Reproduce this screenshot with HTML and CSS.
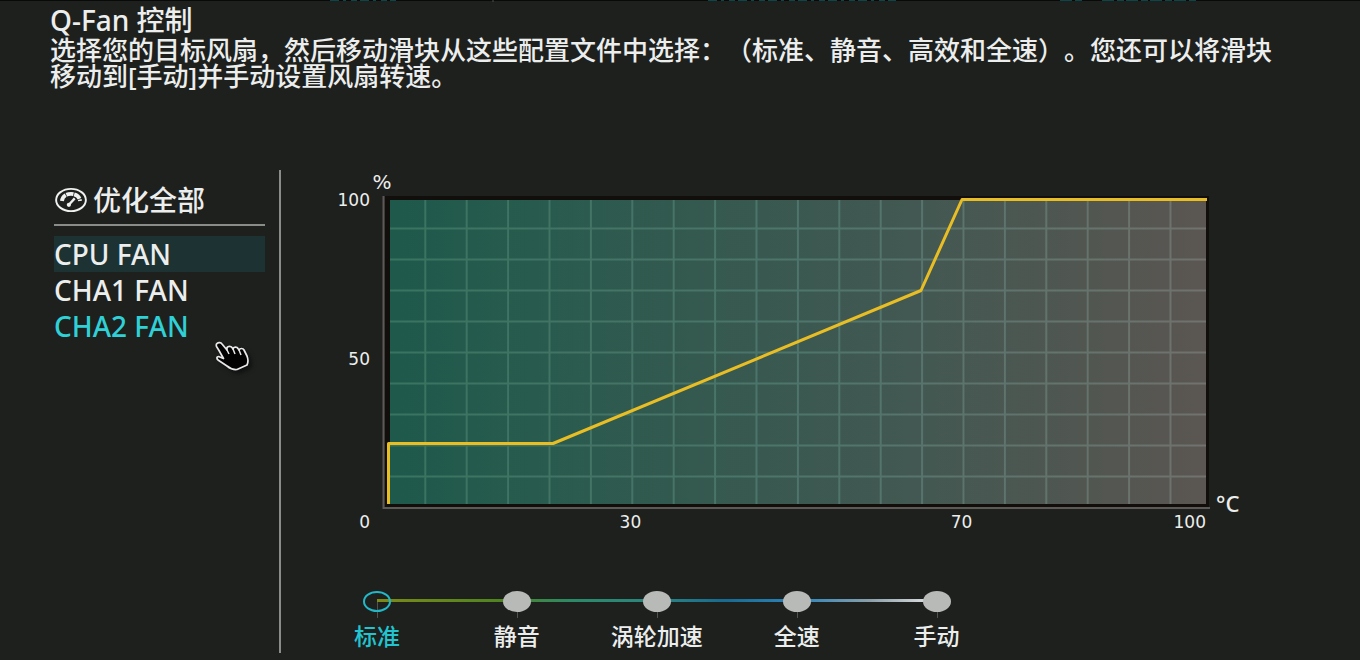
FILE: index.html
```html
<!DOCTYPE html>
<html lang="zh-CN">
<head>
<meta charset="utf-8">
<meta name="viewport" content="width=device-width, initial-scale=1">
<title>Q-Fan 控制</title>
<link rel="stylesheet" href="styles.css">
</head>
<body>
<svg class="backdrop" viewBox="0 0 1360 3" preserveAspectRatio="none" aria-hidden="true">
  <path d="M0 .5H1360" stroke="#080a09"/>
  <g stroke="#0b464b" stroke-width="2" stroke-dasharray="9 4 3 5 6 3">
    <path d="M330 0H396M708 0H896"/>
    <path d="M1060 0H1082M1102 0H1196" stroke-dasharray="12 3 7 2"/>
  </g>
  <path d="M493 0v2" stroke="#4a504d"/>
</svg>

<header class="intro">
  <h1 class="title">Q-Fan 控制</h1>
  <p class="description">选择您的目标风扇，然后移动滑块从这些配置文件中选择：（标准、静音、高效和全速）。您还可以将滑块移动到[手动]并手动设置风扇转速。</p>
</header>

<main class="panel">
  <nav class="sidebar">
    <button class="optimize" type="button">
      <svg class="gauge" viewBox="0 0 32 24" fill="none" stroke="#f0f2f1" aria-hidden="true">
        <ellipse cx="16" cy="12" rx="14" ry="10.500" stroke-width="1.800"/>
        <path d="M7.500 13C8 8 12 6.300 16 6.300S24 8 24.500 13" stroke-width="3.600" stroke-dasharray="6.800 .7"/>
        <path d="M19.500 10.500L14 16.500" stroke-width="2.200"/>
        <circle cx="14" cy="16.500" r="2" fill="#f0f2f1" stroke="none"/>
      </svg>
      <span>优化全部</span>
    </button>
    <ul class="fans">
      <li><button class="fan fan-selected" type="button">CPU FAN</button></li>
      <li><button class="fan" type="button">CHA1 FAN</button></li>
      <li><button class="fan fan-active" type="button">CHA2 FAN</button></li>
    </ul>
    <svg class="pointer" viewBox="0 0 36 31" aria-hidden="true">
      <path d="M2 2.500C3.500 1 6 1.500 7 3L12 9V6.500C13 5 16 5 17 6.500L18 8C18.500 5.500 22 5.500 23 7.500L24 9C25 7 28 7 29 9L32 15C33.500 19 33 22 32 24L22 28.500C18 29 15 27.500 12 25L3 19C1.500 17.500 1.500 15.500 3.500 15.500L8.500 17.500L4 9.500L1.500 5.500C1 4 1.300 3 2 2.500Z" fill="#020202" stroke="#e8e8e8" stroke-width="1.700" stroke-linejoin="round"/>
      <path d="M12 9L14 13M18 8L20 13M24 9L26 14" stroke="#e8e8e8" stroke-width="1.500"/>
    </svg>
  </nav>

  <section class="tuning">
    <div class="chart">
      <span class="percent">%</span>
      <div class="y-axis"><span>100</span><span>50</span></div>
      <svg class="plot" viewBox="382 192 828 318" role="img" aria-label="风扇转速曲线">
        <defs>
          <linearGradient id="heat">
            <stop offset="0" stop-color="#1e594b"/>
            <stop offset=".18" stop-color="#285b4e"/>
            <stop offset=".35" stop-color="#33594f"/>
            <stop offset=".65" stop-color="#435852"/>
            <stop offset=".85" stop-color="#515651"/>
            <stop offset="1" stop-color="#5b5652"/>
          </linearGradient>
          <linearGradient id="rule" gradientUnits="userSpaceOnUse" x1="390" y1="0" x2="1206" y2="0">
            <stop offset="0" stop-color="#39735f"/>
            <stop offset=".5" stop-color="#4d756b"/>
            <stop offset="1" stop-color="#70726e"/>
          </linearGradient>
          <pattern id="cells" patternUnits="userSpaceOnUse" x="424.300" y="227.500" width="41.400" height="31">
            <path d="M1 0V31M0 1H41.400" fill="none" stroke="#fff" stroke-width="2"/>
          </pattern>
          <mask id="lines"><rect x="390" y="200" width="816" height="305" fill="url(#cells)"/></mask>
        </defs>
        <rect x="385" y="196" width="824" height="311" fill="#110e0b"/>
        <rect x="390" y="200" width="816" height="304" fill="url(#heat)"/>
        <rect x="390" y="200" width="816" height="304" fill="url(#rule)" mask="url(#lines)"/>
        <path d="M383.500 196V508H1210" fill="none" stroke="#5c5957" stroke-width="2"/>
        <path d="M388.500 504V443.500H553L921 290.500L962 199.500H1207" fill="none" stroke="#e9bd24" stroke-width="3" stroke-linejoin="round"/>
      </svg>
      <span class="celsius">°C</span>
      <span class="origin">0</span>
      <div class="x-axis"><span class="x30">30</span><span class="x70">70</span><span class="x100">100</span></div>
    </div>

    <fieldset class="profiles" aria-label="风扇配置文件">
      <label class="profile"><input class="knob" type="radio" name="profile" checked><span>标准</span></label>
      <label class="profile"><input class="knob" type="radio" name="profile"><span>静音</span></label>
      <label class="profile"><input class="knob" type="radio" name="profile"><span>涡轮加速</span></label>
      <label class="profile"><input class="knob" type="radio" name="profile"><span>全速</span></label>
      <label class="profile"><input class="knob" type="radio" name="profile"><span>手动</span></label>
    </fieldset>
  </section>
</main>
</body>
</html>
```

FILE: styles.css
```css
* {
  box-sizing: border-box;
}

body {
  margin: 0;
  min-height: 100vh;
  display: flex;
  flex-direction: column;
  background: #1e201e;
  color: #eceeed;
  font-family: "Noto Sans", "Noto Sans CJK SC", sans-serif;
  font-size: 26px;
  font-weight: 500;
}

button {
  border: 0;
  padding: 0;
  background: none;
  color: inherit;
  font: inherit;
  text-align: left;
  cursor: pointer;
}

.backdrop {
  display: block;
  width: 100%;
  height: 3px;
}

.intro {
  padding: 0 64px 0 50px;
}

.title {
  margin: 0;
  font-size: 28px;
  font-weight: 500;
  line-height: 34px;
}

.description {
  margin: 0;
  line-height: 26px;
  text-spacing-trim: space-all;
}

.panel {
  flex: 1;
  display: flex;
  margin: 81px 114px 7px 54px;
}

.sidebar {
  position: relative;
  flex: none;
  width: 227px;
  padding: 9px 14px 0 0;
  border-right: 2px solid #8a8c8a;
}

.optimize {
  display: flex;
  align-items: center;
  gap: 5px;
  width: 100%;
  height: 47px;
  padding-bottom: 4px;
  border-bottom: 2px solid #8a8c8a;
  font-size: 28px;
  line-height: 40px;
}

.gauge {
  width: 34px;
  height: 26px;
}

.fans {
  margin: 10px 0 0;
  padding: 0;
  list-style: none;
}

.fan {
  display: block;
  width: 100%;
  font-size: 28px;
  line-height: 36px;
}

.fan-selected {
  background: #1c3233;
}

.fan-active {
  color: #2fd0d6;
}

.pointer {
  position: absolute;
  top: 171px;
  left: 161px;
  width: 36px;
  height: 31px;
  filter: drop-shadow(3px 3px 2px #0e100f);
}

.tuning {
  flex: 1;
  min-width: 0;
  padding-left: 26px;
}

.chart {
  display: grid;
  grid-template-columns: 63px 1fr 24px;
  column-gap: 12px;
  font-family: "DejaVu Sans", sans-serif;
  font-size: 17px;
  line-height: 16px;
}

.percent {
  grid-column: 1 / 3;
  width: 150px;
  padding-top: 3px;
  line-height: 19px;
  text-align: center;
  font-size: 20px;
}

.y-axis {
  grid-column: 1;
  display: grid;
  grid-template-rows: 1fr 1fr;
  text-align: right;
}

.plot {
  grid-column: 2;
  display: block;
  width: 100%;
}

.celsius {
  align-self: end;
  margin-left: -6px;
  font-family: "Noto Sans", sans-serif;
  font-size: 22px;
  line-height: 14px;
}

.origin {
  grid-column: 1;
  padding-top: 4px;
  text-align: right;
}

.x-axis {
  display: grid;
  grid-template-columns: repeat(5, 1fr);
  padding-top: 4px;
  text-align: center;
}

.x30 {
  grid-column: 2;
}

.x70 {
  grid-column: 4;
}

.x100 {
  grid-column: 5;
  padding-right: 4px;
  text-align: right;
}

.profiles {
  position: relative;
  display: grid;
  grid-template-columns: repeat(5, minmax(0, 1fr));
  width: 74.5%;
  margin: 61px 0 0;
  border: 0;
  padding: 0;
}

.profiles::after {
  content: "";
  position: absolute;
  top: 8px;
  left: 10%;
  right: 10%;
  height: 3px;
  background: linear-gradient(90deg, #7c8a18, #4f8420 22%, #2b8a68 35%, #2a8580 50%, #176a91 62%, #2d86bd 76%, #8b9faa 88%, #e6e6e6);
  pointer-events: none;
}

.profile {
  position: relative;
  display: flex;
  flex-direction: column;
  align-items: center;
  gap: 9px;
  font-size: 23px;
  line-height: 30px;
  cursor: pointer;
}

.profile::before {
  content: "";
  position: absolute;
  top: 10px;
  left: 50%;
  width: 1px;
  height: 17px;
  background: #505351;
}

.knob {
  appearance: none;
  width: 28px;
  height: 21px;
  margin: 0;
  border-radius: 50%;
  background: #b8bab8;
  z-index: 1;
}

.knob:checked {
  border: 2px solid #22b8c8;
  background: none;
}

.profile:has(:checked) {
  color: #22c4cf;
}
```
